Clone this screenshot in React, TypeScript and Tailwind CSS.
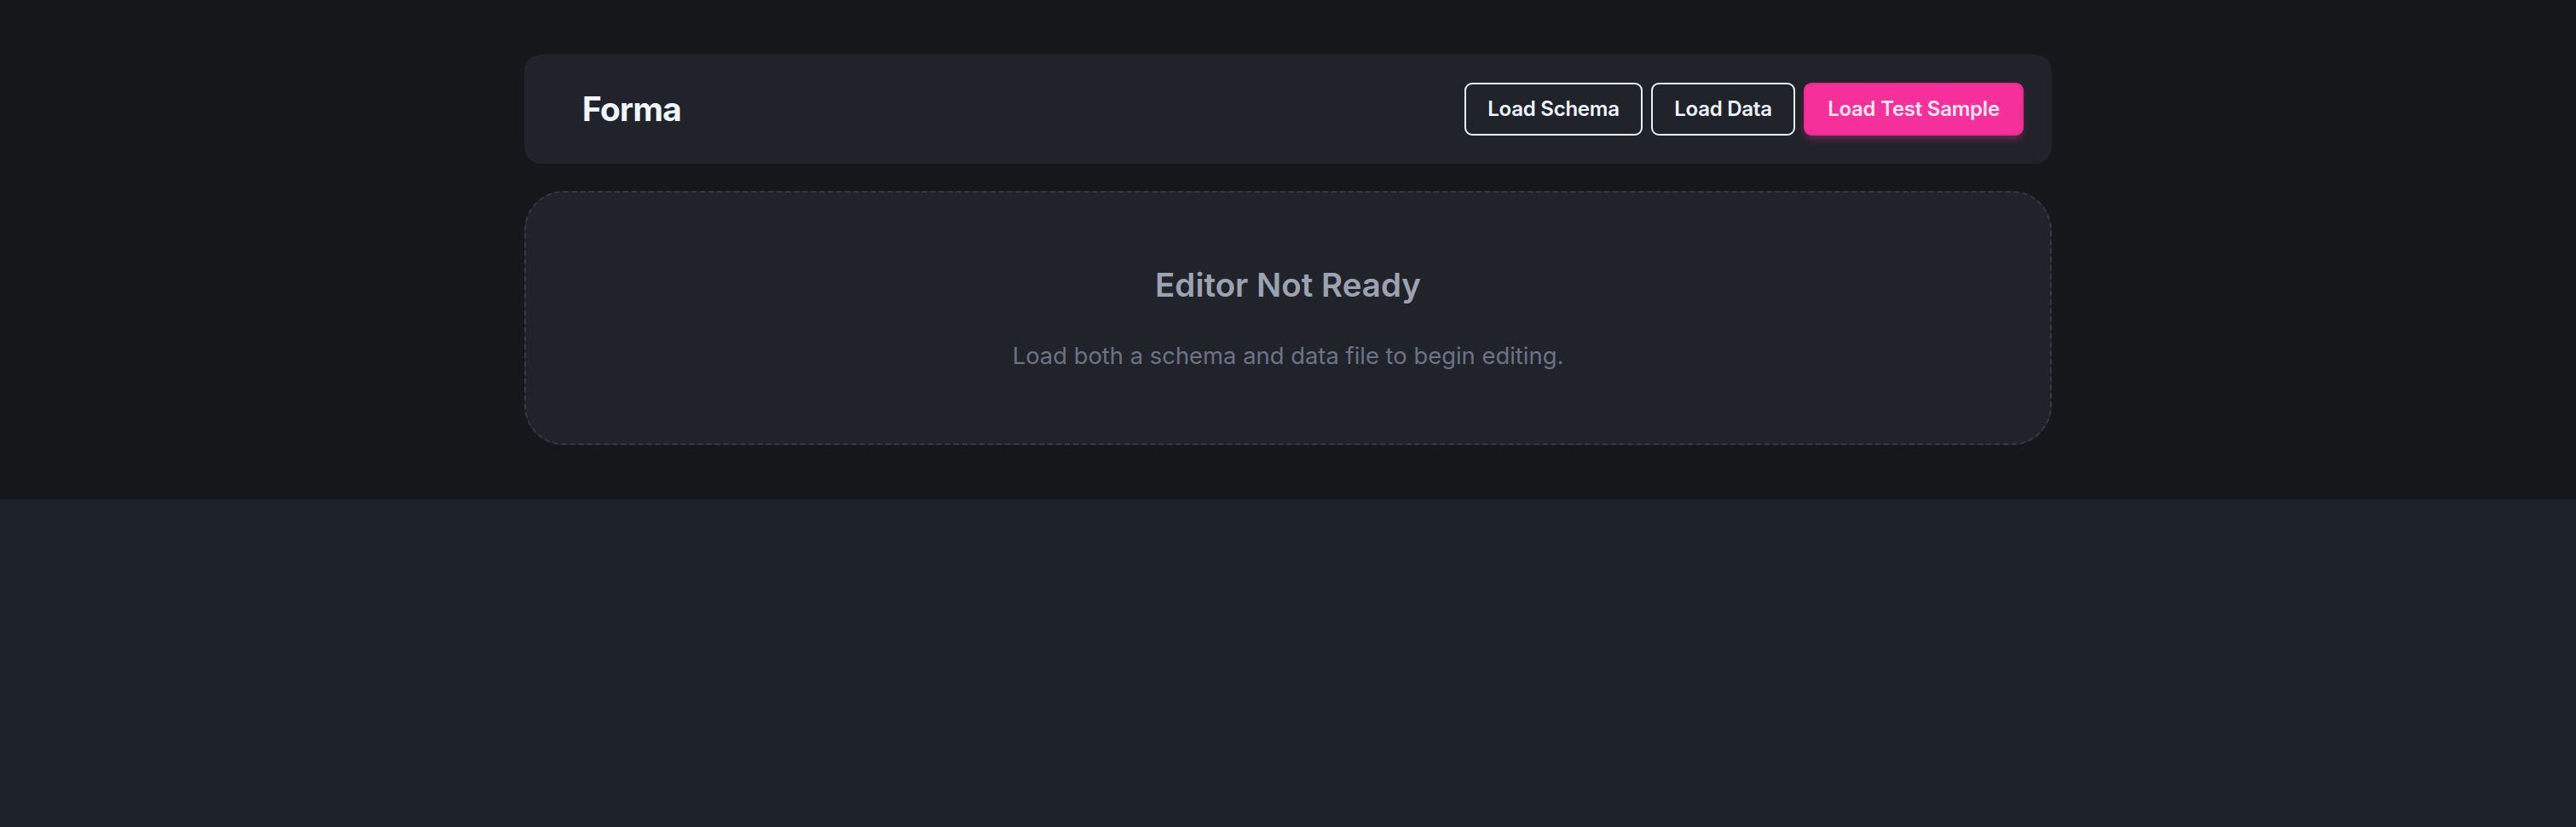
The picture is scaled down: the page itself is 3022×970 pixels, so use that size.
import type React from "react"

const outlineBtn =
  "h-[62px] rounded-[9px] border-2 border-[#e8f1fb] bg-transparent px-[24px] text-[24px] font-semibold text-[#eef4fb] tracking-[-0.01em]"

export default function App(): React.ReactElement {
  return (
    <div className="h-screen w-full overflow-hidden bg-[#1e232b] font-['Inter',sans-serif]">
      <div className="w-full bg-[#16171b] px-[615px] py-[64px]">
        <div className="mx-auto flex w-full max-w-[1792px] flex-col gap-[32px]">
          {/* Top bar */}
          <header className="flex h-[128px] items-center justify-between rounded-[20px] bg-[#21232b] pl-[68px] pr-[33px]">
            <h1 className="text-[39px] font-bold tracking-[-0.02em] text-[#eef6ff]">Forma</h1>
            <div className="flex items-center gap-[10px]">
              <button className={outlineBtn + " w-[209px]"}>Load Schema</button>
              <button className={outlineBtn + " w-[169px]"}>Load Data</button>
              <button className="h-[62px] w-[258px] rounded-[9px] border-2 border-[#e82b8f] bg-[#f5309a] text-[24px] font-semibold tracking-[-0.01em] text-[#fde4f1] shadow-[0_6px_8px_-2px_rgba(245,48,154,0.35)]">
                Load Test Sample
              </button>
            </div>
          </header>

          {/* Empty state */}
          <section className="flex flex-col items-center rounded-[46px] border-2 border-dashed border-[#343843] bg-[#21232b] pt-[86px] pb-[83px]">
            <h2 className="text-[38.5px] leading-[44px] font-semibold text-[#9ca3b0]">Editor Not Ready</h2>
            <p className="mt-[41px] text-[27.4px] leading-[40px] text-[#6b7385]">
              Load both a schema and data file to begin editing.
            </p>
          </section>
        </div>
      </div>
    </div>
  )
}
